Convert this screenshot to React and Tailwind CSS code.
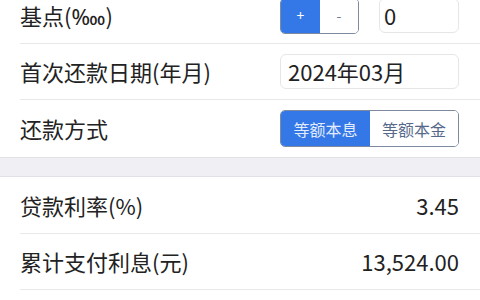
import React from "react";

const font = "font-['Noto_Sans_CJK_SC','Noto_Sans',sans-serif]";

function Row({ label, children, h = "h-[56px]" }) {
  return (
    <div className={`flex items-center justify-between ${h} ml-5 pr-[21px] border-b border-[#e9e9ec]`}>
      <span className="text-[22px] text-[#222]">{label}</span>
      {children}
    </div>
  );
}

export default function App() {
  return (
    <div className={`w-[480px] h-[300px] overflow-hidden bg-white ${font}`}>
      <div className="-mt-[12px]">
        <Row label="基点(‱)">
          <div className="flex items-center gap-[20px]">
            <div className="flex h-[36px] w-[79px] rounded-[5px] border border-[#7d8aa0] overflow-hidden">
              <div className="w-[39px] bg-[#3478e8] text-white flex items-center justify-center text-[14px]">+</div>
              <div className="flex-1 bg-white text-[#6b7a93] flex items-center justify-center text-[14px]">-</div>
            </div>
            <div className="h-[35px] w-[80px] rounded-[6px] border border-[#e6e6e8] flex items-center pl-[4px] text-[22px] text-[#222]">0</div>
          </div>
        </Row>
        <Row label="首次还款日期(年月)">
          <div className="h-[35px] w-[179px] rounded-[6px] border border-[#e6e6e8] flex items-center pl-[7px] text-[22px] text-[#222]">2024年03月</div>
        </Row>
        <div className="flex items-center justify-between h-[57px] ml-5 pr-[21px]">
          <span className="text-[22px] text-[#222]">还款方式</span>
          <div className="flex h-[37px] w-[179px] rounded-[5px] border border-[#7d8aa0] overflow-hidden">
            <div className="w-[89px] bg-[#3478e8] text-[#e3ecfc] flex items-center justify-center text-[16px]">等额本息</div>
            <div className="flex-1 bg-white text-[#56698a] flex items-center justify-center text-[16px]">等额本金</div>
          </div>
        </div>
        <div className="h-[20px] bg-[#f0f0f4] border-t border-b border-[#e2e2e6]"></div>
        <Row label="贷款利率(%)" h="h-[57px]">
          <span className="text-[22px] text-[#222]">3.45</span>
        </Row>
        <Row label="累计支付利息(元)">
          <span className="text-[22px] text-[#222]">13,524.00</span>
        </Row>
        <Row label="" />
      </div>
    </div>
  );
}
